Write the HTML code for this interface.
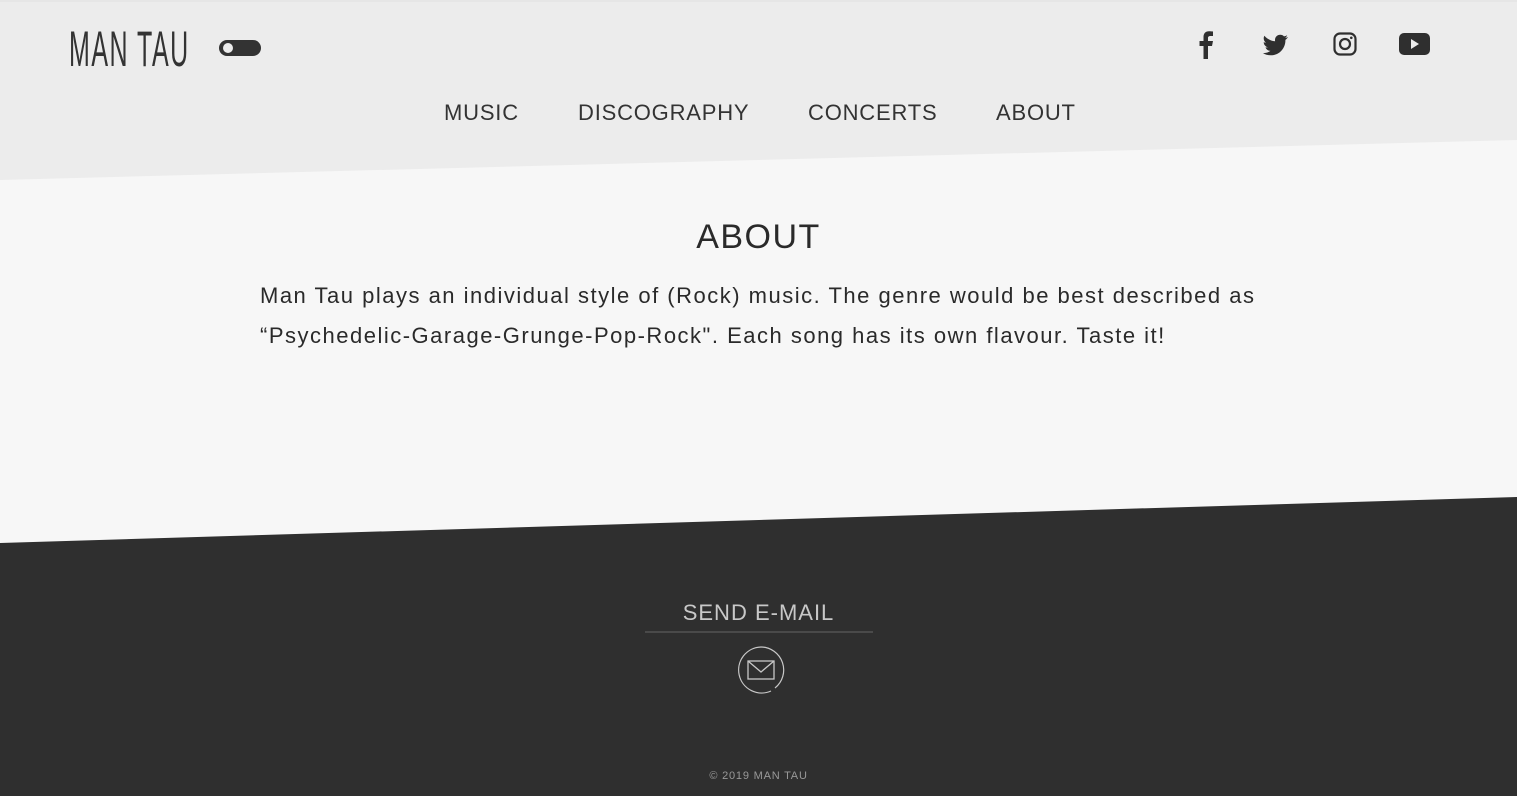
<!DOCTYPE html>
<html><head><meta charset="utf-8"><style>
body{margin:0;width:1517px;height:796px;overflow:hidden;position:relative;font-family:"Liberation Sans",sans-serif;background:#f7f7f7;color:#2f2f2f}
.a{position:absolute;white-space:nowrap}
.nav{top:100px;font-size:22px;letter-spacing:0.8px;color:#333}
</style></head><body>
<svg class="a" style="left:0;top:0" width="1517" height="796">
<polygon points="0,0 1517,0 1517,140 0,180" fill="#ececec"/>
<rect x="0" y="0" width="1517" height="2" fill="#e6e6e6"/>
<polygon points="0,543 1517,497 1517,796 0,796" fill="#2f2f2f"/>
<rect x="219" y="40" width="42" height="16" rx="8" fill="#333"/>
<circle cx="228" cy="48" r="5" fill="#ececec"/>
<path d="M1208,59 V46 H1212 L1213,41 H1208 V38 C1208,36.5 1209,36 1210.5,36 H1213 V31.5 C1212,31.3 1210.5,31.2 1209,31.2 C1205.5,31.2 1203.5,33.3 1203.5,37 V41 H1199.5 V46 H1203.5 V59Z" fill="#2f2f2f"/>
<path d="M1288,37 C1287,37.5 1286,37.8 1285,37.9 C1286,37.2 1286.8,36.3 1287.2,35.2 C1286.2,35.8 1285.1,36.2 1284,36.4 C1283,35.4 1281.7,34.8 1280.2,34.8 C1277.3,34.8 1275,37.1 1275,40 C1275,40.4 1275,40.8 1275.1,41.2 C1270.8,41 1267,38.9 1264.4,35.8 C1264,36.6 1263.7,37.5 1263.7,38.4 C1263.7,40.2 1264.6,41.8 1266,42.7 C1265.2,42.7 1264.4,42.4 1263.7,42.1 C1263.7,44.6 1265.5,46.7 1267.9,47.2 C1267.1,47.4 1266.3,47.5 1265.5,47.3 C1266.2,49.4 1268.1,50.9 1270.4,50.9 C1268.6,52.3 1266.3,53.1 1263.9,53.1 C1263.5,53.1 1263.1,53.1 1262.7,53 C1265,54.5 1267.8,55.3 1270.7,55.3 C1280.2,55.3 1285.4,47.4 1285.4,40.6 L1285.4,39.9 C1286.4,39.2 1287.3,38.2 1288,37Z" fill="#2f2f2f"/>
<rect x="1334.5" y="33.5" width="21" height="21" rx="5.5" fill="none" stroke="#2f2f2f" stroke-width="2.2"/>
<circle cx="1345" cy="44" r="5" fill="none" stroke="#2f2f2f" stroke-width="2.2"/>
<circle cx="1351.3" cy="37.8" r="1.3" fill="#2f2f2f"/>
<rect x="1399" y="33" width="31" height="22" rx="5" fill="#2f2f2f"/>
<polygon points="1411,39 1411,49 1419,44" fill="#ececec"/>
<line x1="645" y1="632" x2="873" y2="632" stroke="#666" stroke-width="1"/>
<path d="M761,647 A23,23 0 1 0 771,691" fill="none" stroke="#c8c8c8" stroke-width="1.2"/>
<path d="M775,688 A23,23 0 0 0 761,647" fill="none" stroke="#c8c8c8" stroke-width="1.2"/>
<rect x="748" y="661" width="26" height="18" fill="none" stroke="#c8c8c8" stroke-width="1.3"/>
<polyline points="748,661 761,672 774,661" fill="none" stroke="#c8c8c8" stroke-width="1.3"/>
</svg>
<div class="a" style="left:69px;top:20px;font-size:50px;transform:scaleX(0.5);transform-origin:left top;letter-spacing:3px;color:#333">MAN TAU</div>
<div class="a nav" style="left:444px">MUSIC</div>
<div class="a nav" style="left:578px">DISCOGRAPHY</div>
<div class="a nav" style="left:808px">CONCERTS</div>
<div class="a nav" style="left:996px">ABOUT</div>
<div class="a" style="left:0;width:1517px;text-align:center;top:218px;font-size:34px;letter-spacing:1.5px;color:#2a2a2a">ABOUT</div>
<div class="a" style="left:260px;top:276px;font-size:22px;line-height:40px;letter-spacing:1.5px;color:#2a2a2a">Man Tau plays an individual style of (Rock) music. The genre would be best described as<br>“Psychedelic-Garage-Grunge-Pop-Rock". Each song has its own flavour. Taste it!</div>
<div class="a" style="left:0;width:1517px;text-align:center;top:600px;font-size:22px;letter-spacing:1px;color:#c8c8c8">SEND E-MAIL</div>
<div class="a" style="left:0;width:1517px;text-align:center;top:770px;font-size:11px;letter-spacing:0.8px;color:#999">© 2019 MAN TAU</div>
</body></html>
